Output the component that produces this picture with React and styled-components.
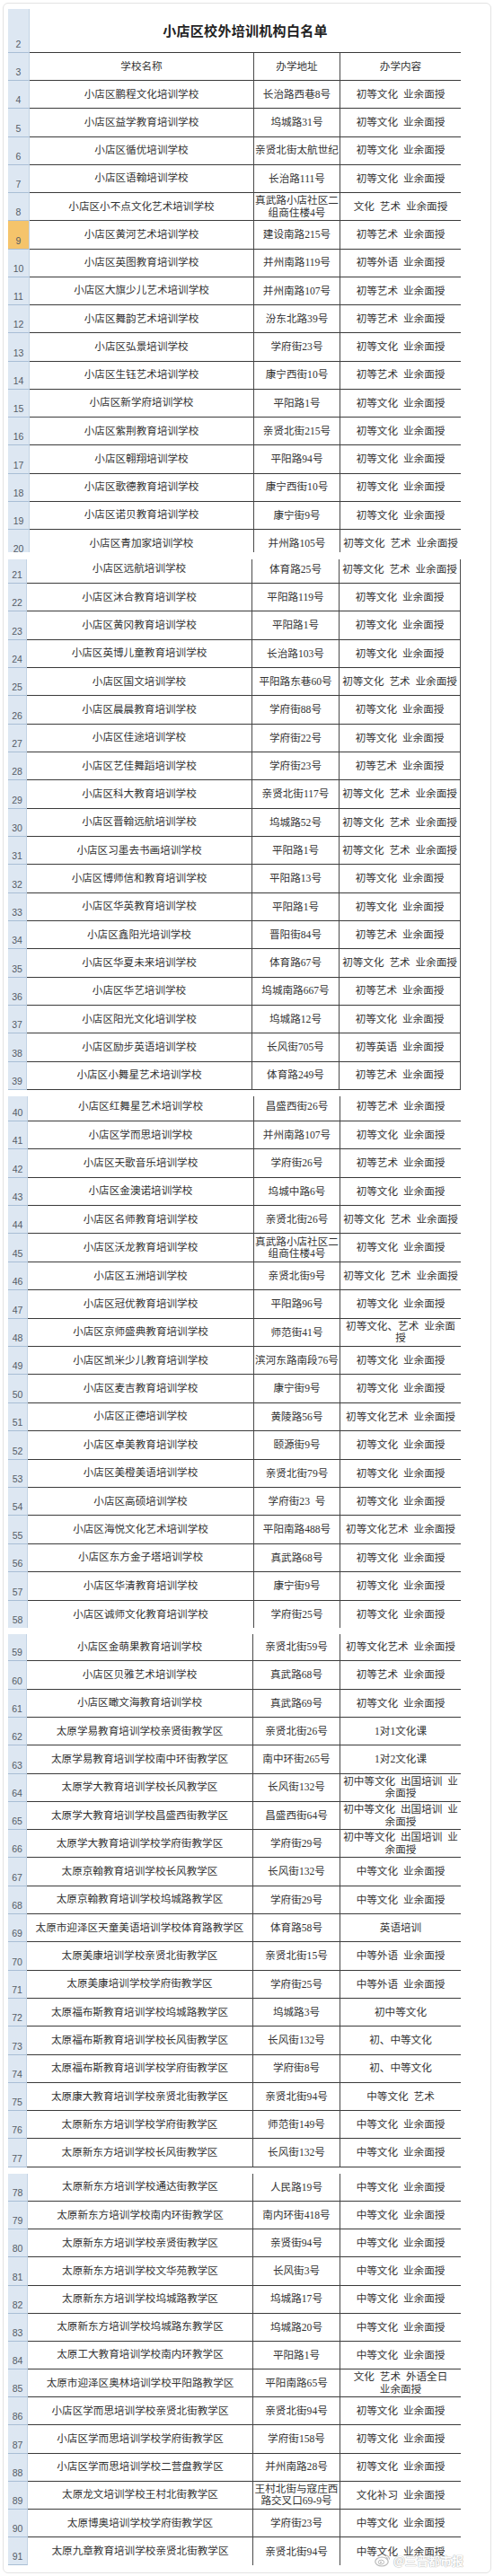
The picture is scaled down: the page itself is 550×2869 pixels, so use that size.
import React from 'react'
import styled, { createGlobalStyle } from 'styled-components'

const GlobalStyle = createGlobalStyle`
    html, body {
        margin: 0;
        padding: 0;
        background: #ffffff;
    }
    body {
        font-family: "Liberation Serif", "Noto Sans CJK SC", serif;
    }
`

const FONT = `"Liberation Serif", "Noto Sans CJK SC", serif`

// [no, name, address, content, selected]
const SLICES = [
    {
        cols: '24px 250px 96px 134px',
        rowH: 31.25,
        top: 6,
        head: true,
        lastH: 25,
        lastLine: 'soft',
        rows: [
            [4, '小店区鹏程文化培训学校', '长治路西巷8号', '初等文化 业余面授'],
            [5, '小店区益学教育培训学校', '坞城路31号', '初等文化 业余面授'],
            [6, '小店区循优培训学校', '亲贤北街太航世纪', '初等文化 业余面授'],
            [7, '小店区语翰培训学校', '长治路111号', '初等文化 业余面授'],
            [8, '小店区小不点文化艺术培训学校', '真武路小店社区二\n组商住楼4号', '文化 艺术 业余面授'],
            [9, '小店区黄河艺术培训学校', '建设南路215号', '初等艺术 业余面授', true],
            [10, '小店区英图教育培训学校', '并州南路119号', '初等外语 业余面授'],
            [11, '小店区大旗少儿艺术培训学校', '并州南路107号', '初等艺术 业余面授'],
            [12, '小店区舞韵艺术培训学校', '汾东北路39号', '初等艺术 业余面授'],
            [13, '小店区弘景培训学校', '学府街23号', '初等文化 业余面授'],
            [14, '小店区生钰艺术培训学校', '康宁西街10号', '初等艺术 业余面授'],
            [15, '小店区新学府培训学校', '平阳路1号', '初等文化 业余面授'],
            [16, '小店区紫荆教育培训学校', '亲贤北街215号', '初等文化 业余面授'],
            [17, '小店区翱翔培训学校', '平阳路94号', '初等文化 业余面授'],
            [18, '小店区歌德教育培训学校', '康宁西街10号', '初等文化 业余面授'],
            [19, '小店区诺贝教育培训学校', '康宁街9号', '初等文化 业余面授'],
            [20, '小店区青加家培训学校', '并州路105号', '初等文化 艺术 业余面授'],
        ],
    },
    {
        cols: '21px 251px 97px 135px',
        rowH: 31.33,
        top: 7.7,
        firstH: 27.3,
        lastLine: 'hard',
        rightLine: true,
        rows: [
            [21, '小店区远航培训学校', '体育路25号', '初等文化 艺术 业余面授'],
            [22, '小店区沐合教育培训学校', '平阳路119号', '初等文化 业余面授'],
            [23, '小店区黄冈教育培训学校', '平阳路1号', '初等文化 业余面授'],
            [24, '小店区英博儿童教育培训学校', '长治路103号', '初等文化 业余面授'],
            [25, '小店区国文培训学校', '平阳路东巷60号', '初等文化 艺术 业余面授'],
            [26, '小店区晨晨教育培训学校', '学府街88号', '初等文化 业余面授'],
            [27, '小店区佳途培训学校', '学府街22号', '初等文化 业余面授'],
            [28, '小店区艺佳舞蹈培训学校', '学府街23号', '初等艺术 业余面授'],
            [29, '小店区科大教育培训学校', '亲贤北街117号', '初等文化 艺术 业余面授'],
            [30, '小店区晋翰远航培训学校', '坞城路52号', '初等文化 艺术 业余面授'],
            [31, '小店区习墨去书画培训学校', '平阳路1号', '初等文化 艺术 业余面授'],
            [32, '小店区博师信和教育培训学校', '平阳路13号', '初等文化 业余面授'],
            [33, '小店区华英教育培训学校', '平阳路1号', '初等文化 业余面授'],
            [34, '小店区鑫阳光培训学校', '晋阳街84号', '初等艺术 业余面授'],
            [35, '小店区华夏未来培训学校', '体育路67号', '初等文化 艺术 业余面授'],
            [36, '小店区华艺培训学校', '坞城南路667号', '初等艺术 业余面授'],
            [37, '小店区阳光文化培训学校', '坞城路12号', '初等文化 业余面授'],
            [38, '小店区励步英语培训学校', '长风街705号', '初等英语 业余面授'],
            [39, '小店区小舞星艺术培训学校', '体育路249号', '初等艺术 业余面授'],
        ],
    },
    {
        cols: '22px 252px 96px 134px',
        rowH: 31.4,
        top: 7,
        firstH: 28,
        lastH: 30.5,
        lastLine: 'none',
        rows: [
            [40, '小店区红舞星艺术培训学校', '昌盛西街26号', '初等艺术 业余面授'],
            [41, '小店区学而思培训学校', '并州南路107号', '初等文化 业余面授'],
            [42, '小店区天歌音乐培训学校', '学府街26号', '初等艺术 业余面授'],
            [43, '小店区金澳诺培训学校', '坞城中路6号', '初等文化 业余面授'],
            [44, '小店区名师教育培训学校', '亲贤北街26号', '初等文化 艺术 业余面授'],
            [45, '小店区沃龙教育培训学校', '真武路小店社区二\n组商住楼4号', '初等文化 业余面授'],
            [46, '小店区五洲培训学校', '亲贤北街9号', '初等文化 艺术 业余面授'],
            [47, '小店区冠优教育培训学校', '平阳路96号', '初等文化 业余面授'],
            [48, '小店区京师盛典教育培训学校', '师范街41号', '初等文化、艺术 业余面\n授'],
            [49, '小店区凯米少儿教育培训学校', '滨河东路南段76号', '初等文化 业余面授'],
            [50, '小店区麦吉教育培训学校', '康宁街9号', '初等文化 业余面授'],
            [51, '小店区正德培训学校', '黄陵路56号', '初等文化艺术 业余面授'],
            [52, '小店区卓美教育培训学校', '颐源街9号', '初等文化 业余面授'],
            [53, '小店区美橙美语培训学校', '亲贤北街79号', '初等文化 业余面授'],
            [54, '小店区高硕培训学校', '学府街23 号', '初等文化 业余面授'],
            [55, '小店区海悦文化艺术培训学校', '平阳南路488号', '初等文化艺术 业余面授'],
            [56, '小店区东方金子塔培训学校', '真武路68号', '初等文化 业余面授'],
            [57, '小店区华清教育培训学校', '康宁街9号', '初等文化 业余面授'],
            [58, '小店区诚师文化教育培训学校', '学府街25号', '初等文化 业余面授'],
        ],
    },
    {
        cols: '21px 252px 97px 134px',
        rowH: 31.3,
        top: 6.7,
        firstH: 30.7,
        lastLine: 'hard',
        rows: [
            [59, '小店区金萌果教育培训学校', '亲贤北街59号', '初等文化艺术 业余面授'],
            [60, '小店区贝雅艺术培训学校', '真武路68号', '初等艺术 业余面授'],
            [61, '小店区瞰文海教育培训学校', '真武路69号', '初等文化 业余面授'],
            [62, '太原学易教育培训学校亲贤街教学区', '亲贤北街26号', '1对1文化课'],
            [63, '太原学易教育培训学校南中环街教学区', '南中环街265号', '1对2文化课'],
            [64, '太原学大教育培训学校长风教学区', '长风街132号', '初中等文化 出国培训 业\n余面授'],
            [65, '太原学大教育培训学校昌盛西街教学区', '昌盛西街64号', '初中等文化 出国培训 业\n余面授'],
            [66, '太原学大教育培训学校学府街教学区', '学府街29号', '初中等文化 出国培训 业\n余面授'],
            [67, '太原京翰教育培训学校长风教学区', '长风街132号', '中等文化 业余面授'],
            [68, '太原京翰教育培训学校坞城路教学区', '学府街29号', '中等文化 业余面授'],
            [69, '太原市迎泽区天童美语培训学校体育路教学区', '体育路58号', '英语培训'],
            [70, '太原美康培训学校亲贤北街教学区', '亲贤北街15号', '中等外语 业余面授'],
            [71, '太原美康培训学校学府街教学区', '学府街25号', '中等外语 业余面授'],
            [72, '太原福布斯教育培训学校坞城路教学区', '坞城路3号', '初中等文化'],
            [73, '太原福布斯教育培训学校长风街教学区', '长风街132号', '初、中等文化'],
            [74, '太原福布斯教育培训学校学府街教学区', '学府街8号', '初、中等文化'],
            [75, '太原康大教育培训学校亲贤北街教学区', '亲贤北街94号', '中等文化 艺术'],
            [76, '太原新东方培训学校学府街教学区', '师范街149号', '中等文化 业余面授'],
            [77, '太原新东方培训学校长风街教学区', '长风街132号', '中等文化 业余面授'],
        ],
    },
    {
        cols: '22px 251px 97px 134px',
        rowH: 31.2,
        top: 7.6,
        firstH: 30.6,
        lastLine: 'none',
        rows: [
            [78, '太原新东方培训学校通达街教学区', '人民路19号', '中等文化 业余面授'],
            [79, '太原新东方培训学校南内环街教学区', '南内环街418号', '中等文化 业余面授'],
            [80, '太原新东方培训学校亲贤街教学区', '亲贤街94号', '中等文化 业余面授'],
            [81, '太原新东方培训学校文华苑教学区', '长风街3号', '中等文化 业余面授'],
            [82, '太原新东方培训学校坞城路教学区', '坞城路17号', '中等文化 业余面授'],
            [83, '太原新东方培训学校坞城路东教学区', '坞城路20号', '中等文化 业余面授'],
            [84, '太原工大教育培训学校南内环教学区', '平阳路1号', '中等文化 业余面授'],
            [85, '太原市迎泽区奥林培训学校平阳路教学区', '平阳南路65号', '文化 艺术 外语全日\n业余面授'],
            [86, '小店区学而思培训学校亲贤北街教学区', '亲贤北街94号', '初等文化 业余面授'],
            [87, '小店区学而思培训学校学府街教学区', '学府街158号', '初等文化 业余面授'],
            [88, '小店区学而思培训学校二营盘教学区', '并州南路28号', '初等文化 业余面授'],
            [89, '太原龙文培训学校王村北街教学区', '王村北街与寇庄西\n路交叉口69-9号', '文化补习 业余面授'],
            [90, '太原博奥培训学校学府街教学区', '学府街23号', '中等文化 业余面授'],
            [91, '太原九章教育培训学校亲贤北街教学区', '亲贤北街94号', '中等文化 业余面授'],
        ],
    },
]

function Sheet() {
    return (
        <Card>
            {SLICES.map((slice, si) => (
                <Slice key={si} $top={slice.top}>
                    {slice.head && (
                        <>
                            <RowClip $h={49}>
                                <RowGrid $cols={slice.cols} $h={49}>
                                    <NumCell>2</NumCell>
                                    <TitleCell>小店区校外培训机构白名单</TitleCell>
                                </RowGrid>
                            </RowClip>
                            <RowClip $h={31}>
                                <RowGrid $cols={slice.cols} $h={31}>
                                    <NumCell>3</NumCell>
                                    <Cell $line="hard" $right>学校名称</Cell>
                                    <Cell $line="hard" $right>办学地址</Cell>
                                    <Cell $line="hard" $right={slice.rightLine}>办学内容</Cell>
                                </RowGrid>
                            </RowClip>
                        </>
                    )}
                    {slice.rows.map(([no, name, addr, content, sel], i) => {
                        const first = i === 0 && slice.firstH
                        const last = i === slice.rows.length - 1
                        let h = slice.rowH
                        let shift = 0
                        if (first) {
                            h = slice.firstH
                            shift = slice.firstH - slice.rowH
                        }
                        if (last && slice.lastH) h = slice.lastH
                        const line = last ? slice.lastLine : 'hard'
                        return (
                            <RowClip key={no} $h={h}>
                                <RowGrid $cols={slice.cols} $h={slice.rowH} $shift={shift}>
                                    <NumCell $sel={sel}>{no}</NumCell>
                                    <Cell $line={line} $right>{name}</Cell>
                                    <Cell $line={line} $right $tight>{addr}</Cell>
                                    <Cell $line={line} $right={slice.rightLine} $tight>{content}</Cell>
                                </RowGrid>
                            </RowClip>
                        )
                    })}
                </Slice>
            ))}
            <Watermark>
                <svg width="18" height="15" viewBox="0 0 18 15">
                    <ellipse cx="8" cy="9" rx="7.2" ry="5" fill="#fff" stroke="#b9b9b9" strokeWidth="1.2" />
                    <ellipse cx="7.4" cy="9.6" rx="3.2" ry="2.4" fill="#fff" stroke="#b9b9b9" strokeWidth="1" />
                    <circle cx="7" cy="9.8" r="1" fill="#b9b9b9" />
                    <path d="M12.5 2.2 a4 4 0 0 1 4 4.4" fill="none" stroke="#c4c4c4" strokeWidth="1.2" />
                    <path d="M12.6 4.2 a2 2 0 0 1 2 2.2" fill="none" stroke="#c4c4c4" strokeWidth="1" />
                </svg>
                <span>@三晋都市报</span>
            </Watermark>
        </Card>
    )
}

export default function App() {
    return (
        <>
            <GlobalStyle />
            <Page>
                <Sheet />
            </Page>
        </>
    )
}

const Page = styled.div`
    width: 550px;
    height: 2869px;
    padding: 3px;
    box-sizing: border-box;
    background: #ffffff;
`

const Card = styled.div`
    position: relative;
    height: 2863px;
    box-sizing: border-box;
    border: 1px solid #e3e3e3;
    border-radius: 6px;
    padding: 0 0 0 5px;
    overflow: hidden;
`

const Slice = styled.div`
    display: flex;
    flex-direction: column;
    padding-top: ${p => p.$top}px;
`

const RowClip = styled.div`
    height: ${p => p.$h}px;
    overflow: hidden;
    flex: none;
`

const RowGrid = styled.div`
    display: grid;
    grid-template-columns: ${p => p.$cols};
    height: ${p => p.$h}px;
    margin-top: ${p => p.$shift || 0}px;
`

const NumCell = styled.div`
    display: flex;
    align-items: flex-end;
    justify-content: center;
    box-sizing: border-box;
    padding-bottom: 3px;
    background: ${p => (p.$sel ? '#f5c46b' : '#dde7f2')};
    border-bottom: 1px solid #a9bed5;
    border-right: 1px solid #c3d3e4;
    font-family: "Liberation Sans", sans-serif;
    font-size: 10.5px;
    line-height: 12px;
    color: #555c66;
`

const TitleCell = styled.div`
    grid-column: 2 / 5;
    display: flex;
    align-items: center;
    justify-content: center;
    box-sizing: border-box;
    padding-bottom: 2px;
    border-bottom: 1px solid #3a3a3a;
    font-family: "Noto Sans CJK SC", sans-serif;
    font-weight: 700;
    font-size: 15px;
    letter-spacing: 0.3px;
    color: #222;
`

const lineColor = {
    hard: '1px solid #3a3a3a',
    soft: '1px solid #c9c9c9',
    none: 'none',
}

const Cell = styled.div`
    display: flex;
    align-items: center;
    justify-content: center;
    box-sizing: border-box;
    padding-top: 1px;
    text-align: center;
    white-space: pre-line;
    border-bottom: ${p => lineColor[p.$line || 'hard']};
    border-right: ${p => (p.$right ? '1px solid #4a4a4a' : 'none')};
    font-family: ${FONT};
    font-size: 11.6px;
    line-height: ${p => (p.$tight ? '13.5px' : '14px')};
    word-spacing: 3px;
    color: #333;
    overflow: hidden;
`

const Watermark = styled.div`
    position: absolute;
    right: 30px;
    bottom: 4px;
    display: flex;
    align-items: center;
    gap: 3px;
    span {
        font-family: "Noto Sans CJK SC", sans-serif;
        font-size: 13px;
        font-weight: 700;
        color: #ffffff;
        text-shadow: 0 0 1px #9a9a9a, 0 0 1px #9a9a9a;
        opacity: 0.85;
    }
`
